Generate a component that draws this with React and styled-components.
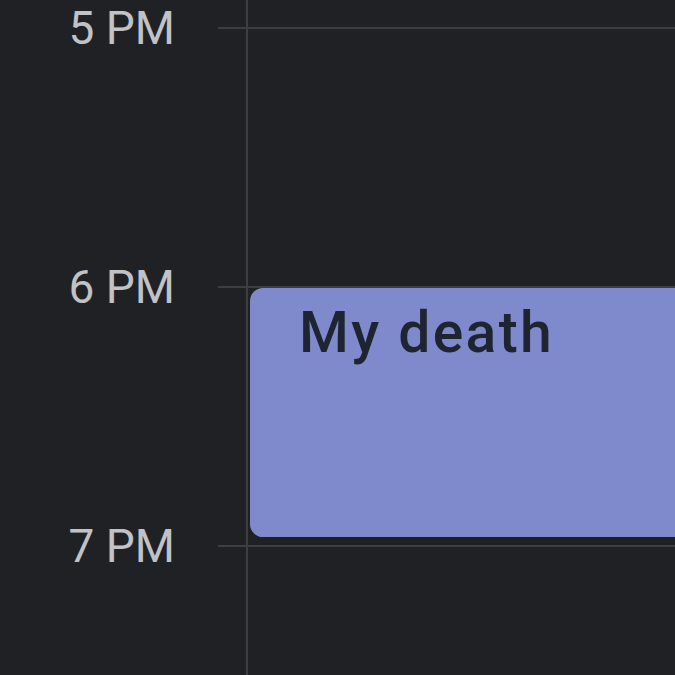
import React from "react";
import styled, { createGlobalStyle } from "styled-components";

const GlobalStyle = createGlobalStyle`
  html, body {
    margin: 0;
    padding: 0;
    background: #202124;
    overflow: hidden;
  }
  body {
    font-family: Roboto, "Noto Sans", "Liberation Sans", sans-serif;
  }
`;

const HOUR = 259;

const Timeline = styled.div`
  width: 675px;
  height: 675px;
  overflow: hidden;
  background: #202124;
  display: flex;
  flex-direction: column;
`;

// first slot is cut off by the scroll position
const Row = styled.div`
  display: flex;
  flex-shrink: 0;
  height: ${(p) => p.$height}px;
`;

const Gutter = styled.div`
  width: 218px;
  flex-shrink: 0;
  display: flex;
  justify-content: flex-end;
  padding-right: 43px;
  box-sizing: border-box;
`;

const Tick = styled.div`
  width: 28px;
  flex-shrink: 0;
  border-top: ${(p) => (p.$line ? "2px solid #3d3e42" : "none")};
  box-sizing: border-box;
`;

const Label = styled.span`
  margin-top: -22px;
  height: 46px;
  font-size: 46px;
  line-height: 46px;
  font-weight: 400;
  color: #c0c2c6;
  white-space: nowrap;
`;

const Day = styled.div`
  flex: 1;
  border-left: 2px solid #3d3e42;
  border-top: ${(p) => (p.$line ? "2px solid #3d3e42" : "none")};
  box-sizing: border-box;
  display: flex;
  flex-direction: column;
  padding: 0 0 0 2px;
  min-width: 0;
`;

const Event = styled.div`
  height: 249px;
  margin-right: -40px;
  background: #7f8acc;
  border-radius: 13px;
  box-sizing: border-box;
  padding: 16px 0 0 49px;
  font-size: 57px;
  line-height: 57px;
  font-weight: 500;
  letter-spacing: 2.4px;
  color: #1e2430;
  white-space: nowrap;
`;

const hours = [
  { label: "5 PM", event: null },
  { label: "6 PM", event: "My death" },
  { label: "7 PM", event: null },
];

export default function App() {
  return (
    <>
      <GlobalStyle />
      <Timeline>
        <Row $height={27}>
          <Gutter />
          <Tick />
          <Day />
        </Row>
        {hours.map((h) => (
          <Row key={h.label} $height={HOUR}>
            <Gutter>
              <Label>{h.label}</Label>
            </Gutter>
            <Tick $line />
            <Day $line>{h.event && <Event>{h.event}</Event>}</Day>
          </Row>
        ))}
      </Timeline>
    </>
  );
}
